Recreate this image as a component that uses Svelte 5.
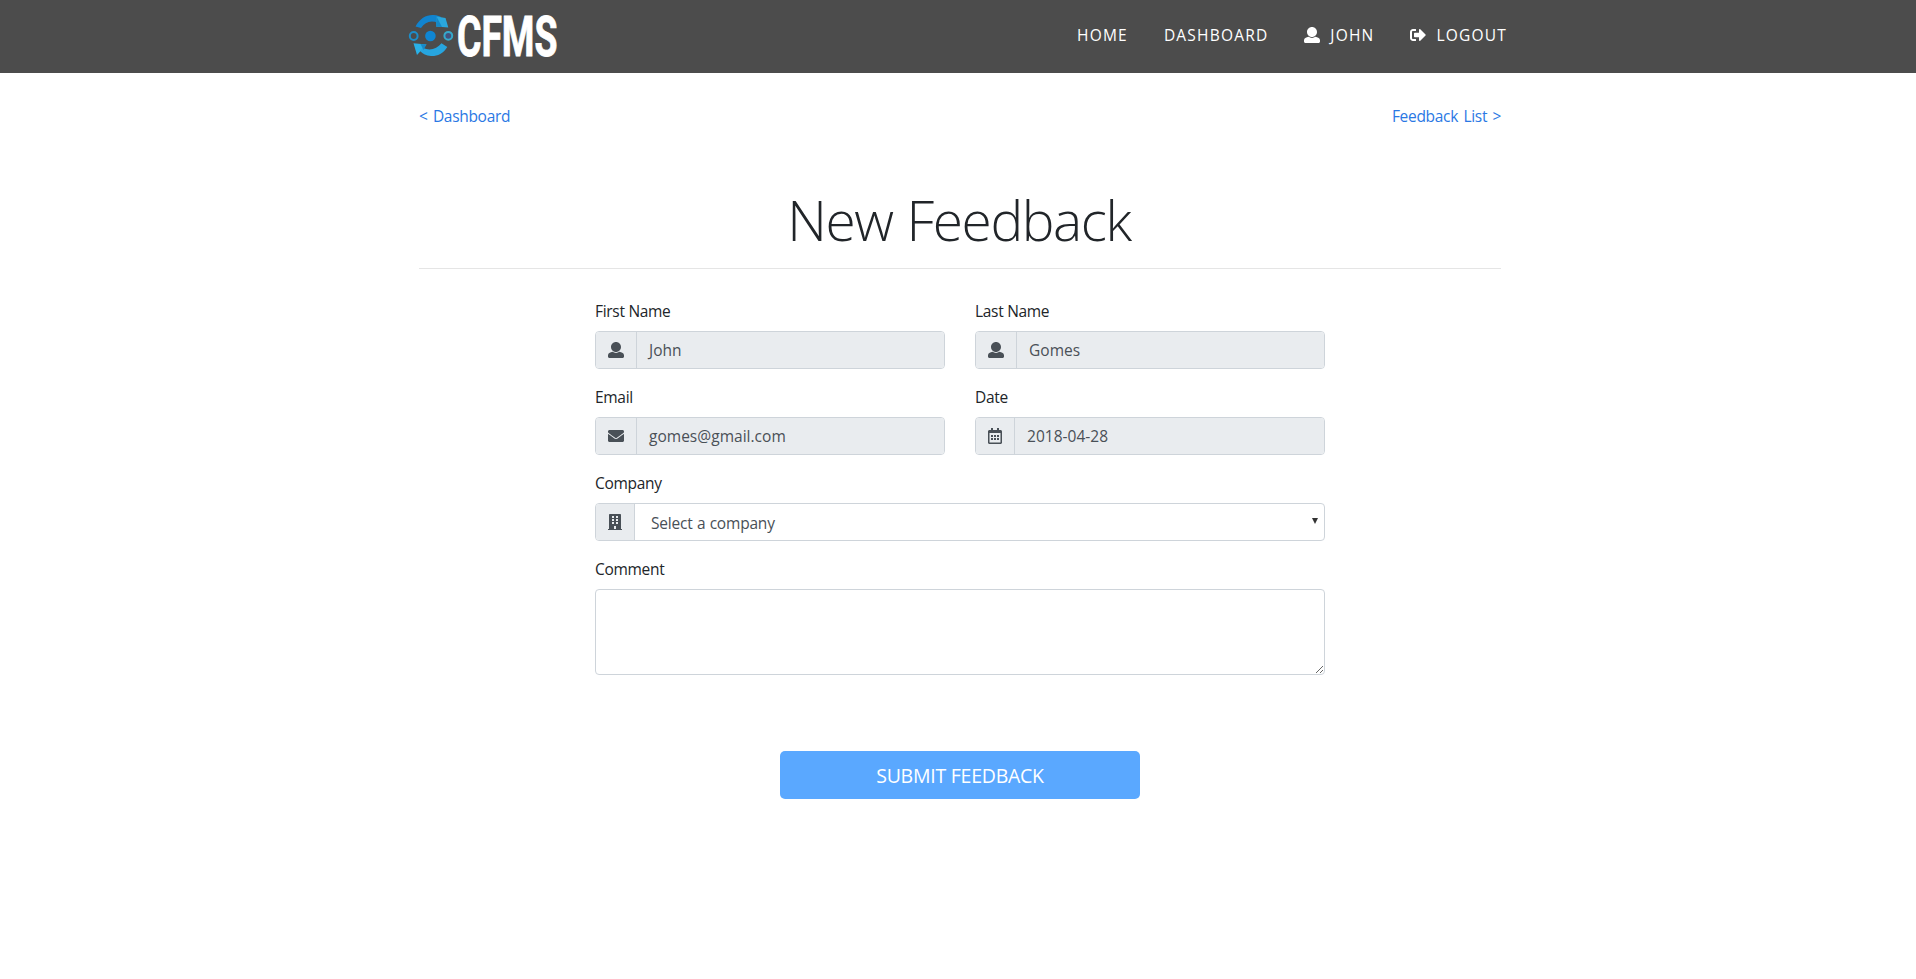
<script>
  const icons = {
    user: [512, 'M256 0c88.366 0 160 71.634 160 160s-71.634 160-160 160S96 248.366 96 160 167.634 0 256 0zm183.283 333.821l-71.313-17.828c-74.923 53.89-165.738 41.864-223.94 0l-71.313 17.828C29.981 344.505 0 382.903 0 426.955V464c0 26.51 21.49 48 48 48h416c26.51 0 48-21.49 48-48v-37.045c0-44.052-29.981-82.45-72.717-93.134z'],
    envelope: [512, 'M502.3 190.8c3.9-3.1 9.7-.2 9.7 4.7V400c0 26.5-21.5 48-48 48H48c-26.5 0-48-21.5-48-48V195.6c0-5 5.7-7.8 9.7-4.7 22.4 17.4 52.1 39.5 154.1 113.6 21.1 15.4 56.7 47.8 92.2 47.6 35.7.3 72-32.8 92.3-47.6 102-74.1 131.6-96.3 154-113.7zM256 320c23.2.4 56.6-29.2 73.4-41.4 132.7-96.3 142.8-104.7 173.4-128.7 5.8-4.5 9.2-11.5 9.2-18.9v-19c0-26.5-21.5-48-48-48H48c-26.5 0-48 21.5-48 48v19c0 7.4 3.4 14.3 9.2 18.9 30.6 23.9 40.7 32.4 173.4 128.7 16.8 12.2 50.2 41.8 73.4 41.4z'],
    logout: [512, 'M497 273L329 441c-15 15-41 4.5-41-17v-96H152c-13.3 0-24-10.7-24-24v-96c0-13.3 10.7-24 24-24h136V88c0-21.4 25.9-32 41-17l168 168c9.3 9.4 9.3 24.6 0 34zM192 436v-40c0-6.6-5.4-12-12-12H96c-17.7 0-32-14.3-32-32V160c0-17.7 14.3-32 32-32h84c6.6 0 12-5.4 12-12V76c0-6.6-5.4-12-12-12H96c-53 0-96 43-96 96v192c0 53 43 96 96 96h84c6.6 0 12-5.4 12-12z'],
    building: [448, 'M436 480h-20V24c0-13.3-10.7-24-24-24H56C42.7 0 32 10.7 32 24v456H12c-6.6 0-12 5.4-12 12v20h448v-20c0-6.6-5.4-12-12-12zM128 64h64v64h-64zM256 64h64v64h-64zM128 160h64v64h-64zM256 160h64v64h-64zM128 256h64v64h-64zM256 256h64v64h-64zM192 384h64v96h-64z'],
    calendar: [448, 'M148 288h-40c-6.6 0-12-5.4-12-12v-40c0-6.6 5.4-12 12-12h40c6.6 0 12 5.4 12 12v40c0 6.6-5.4 12-12 12zm108-12v-40c0-6.6-5.4-12-12-12h-40c-6.6 0-12 5.4-12 12v40c0 6.6 5.4 12 12 12h40c6.6 0 12-5.4 12-12zm96 0v-40c0-6.6-5.4-12-12-12h-40c-6.6 0-12 5.4-12 12v40c0 6.6 5.4 12 12 12h40c6.6 0 12-5.4 12-12zm-96 96v-40c0-6.6-5.4-12-12-12h-40c-6.6 0-12 5.4-12 12v40c0 6.6 5.4 12 12 12h40c6.6 0 12-5.4 12-12zm-96 0v-40c0-6.6-5.4-12-12-12h-40c-6.6 0-12 5.4-12 12v40c0 6.6 5.4 12 12 12h40c6.6 0 12-5.4 12-12zm192 0v-40c0-6.6-5.4-12-12-12h-40c-6.6 0-12 5.4-12 12v40c0 6.6 5.4 12 12 12h40c6.6 0 12-5.4 12-12zm96-260v352c0 26.5-21.5 48-48 48H48c-26.5 0-48-21.5-48-48V112c0-26.5 21.5-48 48-48h48V12c0-6.6 5.4-12 12-12h40c6.6 0 12 5.4 12 12v52h128V12c0-6.6 5.4-12 12-12h40c6.6 0 12 5.4 12 12v52h48c26.5 0 48 21.5 48 48zm-48 346V160H48v298c0 3.3 2.7 6 6 6h340c3.3 0 6-2.7 6-6z']
  };
  const fields = [
    { label: 'First Name', icon: 'user', value: 'John' },
    { label: 'Last Name', icon: 'user', value: 'Gomes' },
    { label: 'Email', icon: 'envelope', value: 'gomes@gmail.com' },
    { label: 'Date', icon: 'calendar', value: '2018-04-28' }
  ];
</script>

{#snippet icon(name)}
  <svg class="icon" width={icons[name][0] / 32} height="16" viewBox="0 0 {icons[name][0]} 512" aria-hidden="true">
    <path fill="currentColor" fill-rule="evenodd" d={icons[name][1]} />
  </svg>
{/snippet}

<div class="page">
  <header>
    <a class="brand" href="#home" aria-label="CFMS">
      <svg width="152" height="73" viewBox="0 -12 152 73">
        <path d="M7.5 14.5C12 6 19 2.3 26 3C29 3.2 31 4 33 5L30 11C23 8 17 10 13 16Z" fill="#1184cf" />
        <path d="M28.5 4.5L37.5 6L40.3 15.5L28 14.5Z" fill="#2aa7dc" />
        <path d="M28.5 4.5L34 15L28 14.5Z" fill="#1587c6" />
        <path d="M15 36C22 39 29 37 33.5 31.3L39.3 35C35 42 29 44.3 23 44C18 43.6 15 42 12 39Z" fill="#27a5df" />
        <path d="M5.5 31.3L18.5 32.6L9 43Z" fill="#29b1e8" />
        <path d="M12.5 32L18.5 32.6L15.5 38Z" fill="#1789c8" />
        <circle cx="22.4" cy="24" r="5.3" fill="#0f86d3" />
        <circle cx="5.7" cy="24" r="3.9" fill="none" stroke="#1c8dc9" stroke-width="2" />
        <circle cx="40.3" cy="23.8" r="3.9" fill="#44517c" stroke="#35a9cb" stroke-width="2" />
        <text x="49" y="43.5" textLength="100.5" lengthAdjust="spacingAndGlyphs">CFMS</text>
      </svg>
    </a>
    <nav>
      <a href="#home">HOME</a>
      <a href="#dashboard">DASHBOARD</a>
      <a href="#profile">{@render icon('user')}<span>JOHN</span></a>
      <a href="#logout">{@render icon('logout')}<span>LOGOUT</span></a>
    </nav>
  </header>

  <main>
    <div class="links">
      <a href="#dashboard">&lt; Dashboard</a>
      <a href="#list">Feedback List &gt;</a>
    </div>
    <h1>New Feedback</h1>
    <form>
      {#each fields as f}
        <div class="field">
          <span class="label">{f.label}</span>
          <div class="group locked">
            <span class="addon">{@render icon(f.icon)}</span>
            <span class="control">{f.value}</span>
          </div>
        </div>
      {/each}
      <div class="field wide">
        <span class="label">Company</span>
        <div class="group">
          <span class="addon">{@render icon('building')}</span>
          <span class="control select"><span>Select a company</span>
            <svg width="6" height="6" viewBox="0 0 6 6"><path d="M0 0H6L3 6Z" fill="#333" /></svg>
          </span>
        </div>
      </div>
      <div class="field wide">
        <label class="label" for="comment">Comment</label>
        <textarea id="comment"></textarea>
      </div>
      <button type="button">SUBMIT FEEDBACK</button>
    </form>
  </main>
</div>

<style>
  :global(body) { margin: 0; background: #fff; overflow: hidden; }
  .page { width: 1920px; height: 979px; font: 15.5px/24px "Open Sans", "Noto Sans", sans-serif; letter-spacing: -0.3px; color: #212529; }
  .page * { box-sizing: border-box; }
  a { color: #2a78e4; text-decoration: none; }
  .icon { display: block; flex: none; }
  header { height: 73px; background: #4c4c4c; padding: 0 413px 0 408px; display: flex; justify-content: space-between; }
  .brand svg { display: block; }
  .brand text { font: 700 56px Roboto, sans-serif; letter-spacing: 0; fill: #fff; stroke: #fff; stroke-width: 0.9px; }
  nav { display: flex; gap: 36px; padding-top: 22px; height: 47px; letter-spacing: 1.2px; font-size: 15.5px; }
  nav a { color: #fff; display: flex; align-items: center; gap: 10px; }
  main { width: 1082px; margin: 0 auto; }
  .links { display: flex; justify-content: space-between; padding: 31px 0 1px; letter-spacing: -0.3px; word-spacing: 1.6px; }
  h1 { margin: 57px 0 30px; height: 83px; border-bottom: 1px solid #e5e5e5; text-align: center; font-size: 55px; line-height: 67px; font-weight: 300; letter-spacing: -1.4px; word-spacing: 1px; padding-right: 2px; }
  form { width: 730px; margin: 0 auto; display: grid; grid-template-columns: 350px 350px; column-gap: 30px; row-gap: 16px; }
  .wide { grid-column: 1 / -1; }
  .label { display: block; margin-bottom: 8px; }
  .group { display: flex; height: 38px; border: 1px solid #ced4da; border-radius: 4px; overflow: hidden; color: #495057; }
  .addon { display: flex; align-items: center; padding: 0 12px; background: #e9ecef; border-right: 1px solid #ced4da; }
  .control { flex: 1; display: flex; align-items: center; padding: 0 12px; letter-spacing: 0.02px; }
  .locked .control { background: #e9ecef; }
  .select { justify-content: space-between; padding: 1px 6px 0 16px; letter-spacing: -0.2px; word-spacing: 0.5px; }
  .select svg { margin-bottom: 3px; }
  textarea { display: block; width: 100%; height: 86px; border: 1px solid #ced4da; border-radius: 4px; background: #fff; resize: vertical; }
  button { grid-column: 1 / -1; justify-self: center; width: 360px; height: 48px; margin-top: 60px; border: 0; border-radius: 5px; background: #5aa8ff; color: #fff; font: 19.5px "Open Sans", sans-serif; letter-spacing: -0.25px; }
</style>
